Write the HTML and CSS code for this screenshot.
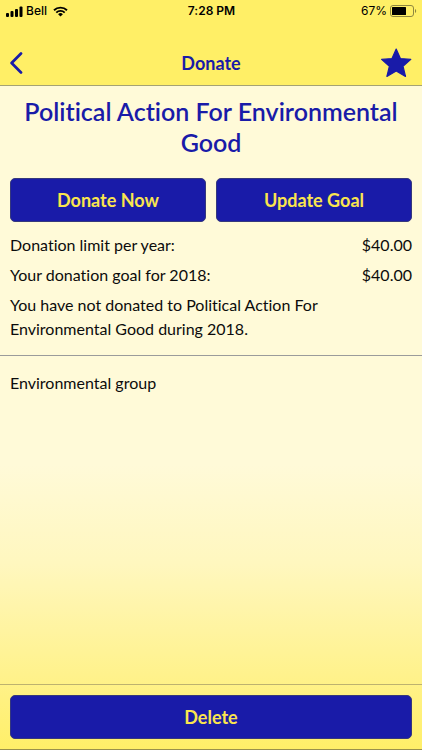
FILE: index.html
```
<!DOCTYPE html>
<html lang="en">
<head>
<meta charset="utf-8">
<meta name="viewport" content="width=device-width, initial-scale=1">
<title>Donate</title>
<link rel="stylesheet" href="styles.css">
</head>
<body>
<div class="status">
  <div class="status-side">
    <svg class="signal" width="17" height="11" viewBox="0 0 17 11" aria-hidden="true"><rect x="0" y="7" width="3" height="4" rx="1"/><rect x="4.5" y="5" width="3" height="6" rx="1"/><rect x="9" y="3" width="3" height="8" rx="1"/><rect x="13.5" y="0.5" width="3" height="10.5" rx="1"/></svg>
    <span>Bell</span>
    <svg class="wifi" width="15" height="11" viewBox="0 0 15 11" aria-hidden="true"><path d="M1 4.2a9.4 9.4 0 0 1 13 0M3.3 6.6a6 6 0 0 1 8.4 0" fill="none" stroke="#000" stroke-width="1.9"/><path d="M7.5 10.6L5.1 8.3a3.4 3.4 0 0 1 4.8 0z"/></svg>
  </div>
  <div class="clock">7:28 PM</div>
  <div class="status-side status-end">
    <span class="percent">67%</span>
    <svg width="27" height="12" viewBox="0 0 27 12" aria-hidden="true"><rect x="0.5" y="0.5" width="23" height="11" rx="2.5" fill="none" stroke="#8f873f"/><rect x="2" y="2" width="14" height="8" rx="0.5"/><path d="M25 4v4c1.6-.6 1.6-3.4 0-4z" fill="#8f873f"/></svg>
  </div>
</div>
<header class="bar">
  <button class="icon-button" type="button" aria-label="Back">
    <svg width="14" height="22" viewBox="0 0 14 22" aria-hidden="true"><path d="M11 1.5L1.6 11L11 20.5" fill="none" stroke="#191ba8" stroke-width="2.7" stroke-linecap="round" stroke-linejoin="round"/></svg>
  </button>
  <h1 class="bar-title">Donate</h1>
  <button class="icon-button icon-end" type="button" aria-label="Favourite">
    <svg width="32" height="30" viewBox="0 0 32 30" aria-hidden="true"><path d="M16.2 1L20.4 10.5L30.8 11.4L23 18.2L25.5 28.4L16.2 23L6.9 28.4L9.4 18.2L1.6 11.4L12 10.5Z" fill="#191ba8" stroke="#191ba8" stroke-width="1.2" stroke-linejoin="round"/></svg>
  </button>
</header>
<main class="content">
  <h2 class="group-name">Political Action For Environmental Good</h2>
  <div class="actions">
    <button class="button" type="button">Donate Now</button>
    <button class="button" type="button">Update Goal</button>
  </div>
  <dl class="facts">
    <div class="fact"><dt>Donation limit per year:</dt><dd>$40.00</dd></div>
    <div class="fact"><dt>Your donation goal for 2018:</dt><dd>$40.00</dd></div>
  </dl>
  <p class="note">You have not donated to Political Action For Environmental Good during 2018.</p>
  <p class="description">Environmental group</p>
</main>
<footer class="footer">
  <button class="button" type="button">Delete</button>
</footer>
</body>
</html>
```
FILE: styles.css
```
* {
  box-sizing: border-box;
}

body {
  margin: 0;
  min-height: 100vh;
  display: flex;
  flex-direction: column;
  font-family: Lato, "Liberation Sans", sans-serif;
  font-size: 16px;
  font-variant-ligatures: none;
  line-height: 24px;
  color: #0c0c0c;
  background: linear-gradient(#fffad8 0%, #fffad8 62%, #fff7bf 75%, #fff28c 90%, #ffef68 100%);
}

h1, h2, p, dl, dd {
  margin: 0;
}

button {
  font-family: inherit;
  cursor: pointer;
}

.status {
  display: flex;
  align-items: center;
  height: 22px;
  padding: 0 5px 0 6px;
  background: #ffef66;
  font-family: Inter, "Liberation Sans", sans-serif;
  font-size: 12px;
  line-height: 16px;
  color: #000;
}

.status-side {
  flex: 1;
  display: flex;
  align-items: center;
  gap: 3px;
  font-weight: 500;
}

.wifi {
  margin-left: 3px;
}

.status-end {
  justify-content: flex-end;
}

.percent {
  font-weight: 400;
}

.clock {
  font-weight: 600;
}

.bar {
  display: flex;
  align-items: center;
  height: 64px;
  padding: 18px 10px 0;
  background: #ffef66;
  border-bottom: 1px solid #a5a273;
}

.icon-button {
  flex: 1;
  display: flex;
  padding: 0;
  border: 0;
  background: none;
}

.icon-end {
  justify-content: flex-end;
}

.bar-title {
  font-size: 18px;
  font-weight: 700;
  color: #191ba8;
}

.content {
  flex: 1;
}

.group-name {
  padding: 10px 10px 20px;
  font-size: 25px;
  font-weight: 600;
  line-height: 31px;
  text-align: center;
  color: #191ba8;
}

.actions {
  display: grid;
  grid-template-columns: 1fr 1fr;
  gap: 10px;
  padding: 0 10px;
}

.button {
  width: 100%;
  height: 44px;
  padding: 0;
  border: 1px solid #35387d;
  border-radius: 5px;
  background: #191ba8;
  color: #fae54e;
  font-size: 18px;
  font-weight: 700;
  line-height: 24px;
}

.facts {
  padding: 11px 10px 0;
}

.fact {
  display: flex;
  justify-content: space-between;
  margin-bottom: 6px;
}

.note {
  padding: 0 10px 14px;
  border-bottom: 1px solid #9b9b9b;
}

.description {
  padding: 15px 10px;
}

.footer {
  padding: 10px;
  border-top: 1px solid #bdb26f;
  border-bottom: 1px solid #99904c;
}
```
